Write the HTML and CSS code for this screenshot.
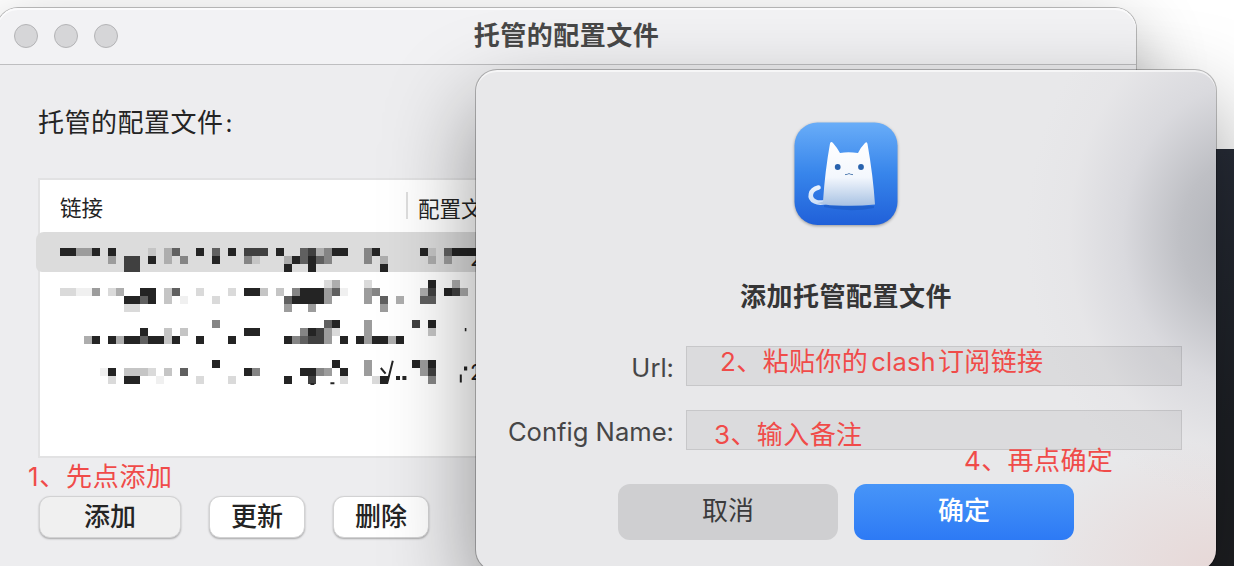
FILE: index.html
```
<!DOCTYPE html>
<html lang="zh-CN">
<head>
<meta charset="utf-8">
<title>托管的配置文件</title>
<link rel="stylesheet" href="styles.css">
</head>
<body>
<main class="desktop">
  <div class="backdrop"></div>
  <section class="window">
    <header class="titlebar">
      <div class="lights"><i></i><i></i><i></i></div>
      <h1>托管的配置文件</h1>
    </header>
    <div class="content">
      <p class="caption">托管的配置文件<span class="colon">:</span></p>
      <div class="table">
        <div class="thead"><span class="th">链接</span><span class="th second">配置文件</span></div>
        <div class="selected"></div>
        <svg class="mosaic" viewBox="0 0 53 18" width="424" height="144" shape-rendering="crispEdges" fill="none" stroke-width="1">
          <path stroke="#242424" d="M0 .5h2M4 .5h1M6 .5h1M17 .5h1M21 .5h1M27 .5h1M34 .5h2M39 .5h1M45 .5h1M49 .5h3M11 1.5h1M19 1.5h1M29 1.5h1M31 1.5h1M28 2.5h1M31 2.5h1M40 2.5h1M46 4.5h1M10 5.5h2M23 5.5h2M30 5.5h3M48 5.5h1M8 6.5h2M11 6.5h1M29 6.5h4M34 9.5h1M46 9.5h1M10 10.5h1M23 10.5h2M31 10.5h1M4 11.5h1M6 11.5h1M8 11.5h2M11 11.5h2M14 11.5h1M17 11.5h1M21 11.5h1M28 11.5h1M35 11.5h1M37 11.5h1M39 11.5h2M42 11.5h1M19 14.5h1M34 14.5h1M44 14.5h1M46 14.5h1M6 15.5h1M23 15.5h1M30 15.5h2M35 15.5h1M8 16.5h2M28 16.5h1M40 16.5h1"/>
          <path stroke="#404040" d="M23 .5h3M31 .5h1M8 1.5h2M8 2.5h2M46 5.5h1M49 5.5h1M44 9.5h1M32 10.5h1M31 11.5h2M46 15.5h1M31 16.5h1"/>
          <path stroke="#606060" d="M14 .5h1M19 .5h1M30 .5h1M48 .5h1M30 1.5h1M32 1.5h1M14 5.5h1M34 5.5h1M10 6.5h1M28 6.5h1M40 6.5h1M45 6.5h2M33 9.5h1M10 11.5h1M30 11.5h1M15 15.5h1"/>
          <path stroke="#858585" d="M33 .5h1M38 .5h1M15 1.5h1M23 1.5h1M33 1.5h1M38 1.5h1M29 5.5h1M39 5.5h1M19 9.5h1M30 10.5h1M29 11.5h1M24 15.5h1M32 15.5h1M46 16.5h1"/>
          <path stroke="#9c9c9c" d="M2 .5h2M6 1.5h1M48 1.5h1M4 5.5h1M33 5.5h1M38 5.5h1M33 6.5h1M38 6.5h1M28 7.5h1M31 7.5h1M40 7.5h1M38 9.5h1M33 10.5h1M38 10.5h1M33 11.5h1M38 11.5h1M38 14.5h1M45 14.5h1M33 15.5h1M38 15.5h1M45 15.5h1"/>
          <path stroke="#adadad" d="M13 .5h1M32 .5h1M13 1.5h1M28 1.5h1M40 1.5h1M46 1.5h1M34 4.5h1M49 4.5h1M7 5.5h1M45 5.5h1M50 5.5h1M42 6.5h1M3 11.5h1M7 11.5h1M41 11.5h1"/>
          <path stroke="#c5c5c5" d="M11 .5h1M46 .5h1M24 1.5h1M13 5.5h1M25 5.5h1M27 5.5h1M13 6.5h1M13 10.5h1M15 10.5h1M46 10.5h1M13 11.5h1M8 15.5h3M13 15.5h1"/>
          <path stroke="#dadada" d="M33 4.5h1M38 4.5h1M0 5.5h2M6 5.5h1M17 5.5h1M21 5.5h1M19 6.5h1M8 7.5h2M34 10.5h1M11 15.5h1M17 16.5h1M21 16.5h1M6 16.5h1M35 16.5h1M39 16.5h1"/>
          <path stroke="#f0f0f0" d="M2 5.5h2M35 5.5h1M15 6.5h1M5 15.5h1M12 16.5h1"/>
          <g shape-rendering="auto" stroke="#242424" stroke-width=".25">
            <path d="M40.1 15l.6.7M41.6 14.1l-.7 2.8M50.1 15.8v1M31.3 17h.5M33.8 16.9h.5"/>
            <path stroke="none" fill="#242424" d="M42 16h.5v.5H42zM42.8 16h.5v.5h-.5zM50.5 14.8h.4v.5h-.4zM50.6 10h.2v.4h-.2z"/>
          </g>
        </svg>
        <span class="digit first">2</span>
        <span class="digit last">2</span>
      </div>
      <div class="actions">
        <button class="btn wide">添加</button>
        <button class="btn">更新</button>
        <button class="btn">删除</button>
      </div>
    </div>
  </section>

  <section class="dialog">
    <svg class="app-icon" viewBox="0 0 104 104" width="104" height="104">
      <defs>
        <linearGradient id="blue" x2="0" y2="1"><stop stop-color="#69adf8"/><stop offset=".5" stop-color="#3785eb"/><stop offset="1" stop-color="#2060d9"/></linearGradient>
        <linearGradient id="fur" x2="0" y2="1"><stop stop-color="#fff"/><stop offset=".55" stop-color="#f3f7fd"/><stop offset="1" stop-color="#a8c2e3"/></linearGradient>
        <linearGradient id="tail" x2="0" y2="1"><stop stop-color="#e9f1fd"/><stop offset="1" stop-color="#d0e1f8"/></linearGradient>
      </defs>
      <rect x=".5" y=".5" width="103" height="102.5" rx="23" fill="url(#blue)"/>
      <path d="M30 83 80 84 80 86Q55 91 30 85Z" fill="#1753bb" opacity=".45"/>
      <path d="M24.500 65.500C16 67.500 14 76 21 79.500Q25 81.500 31 80" fill="none" stroke="url(#tail)" stroke-width="4.600" stroke-linecap="round"/>
      <path d="M36 21.500Q37 19 39 21Q43 25.500 46 31Q54 29.300 64 31Q67 25 71 21Q73 19 73.500 22Q79 53 81 82.500Q66 84 54 83.800Q38 84.300 23 81.300L29 79.500Q31 49 36 21.500Z" fill="url(#fur)"/>
      <circle cx="43.700" cy="45" r="2.900" fill="#2862ad"/>
      <circle cx="67" cy="45" r="2.900" fill="#2862ad"/>
      <path d="M51 52.600Q53.500 52.700 55 51.500Q56.500 52.700 59 52.600" fill="none" stroke="#4775ad" stroke-width=".9"/>
    </svg>
    <h2>添加托管配置文件</h2>
    <form class="form">
      <label for="url">Url:</label><input id="url" class="field" type="text">
      <label for="name">Config Name:</label><input id="name" class="field" type="text">
    </form>
    <div class="choices">
      <button class="choice cancel">取消</button>
      <button class="choice confirm">确定</button>
    </div>
  </section>

  <span class="note one">1、先点添加</span>
  <span class="note two">2、粘贴你的<b>clash</b>订阅链接</span>
  <span class="note three">3、输入备注</span>
  <span class="note four">4、再点确定</span>
</main>
</body>
</html>
```
FILE: styles.css
```
* { box-sizing: border-box; }
body { margin: 0; font-family: Inter, "Noto Sans CJK SC", sans-serif; }
h1, h2, p { margin: 0; }
button { border: 0; padding: 0; font: inherit; }

.desktop { position: relative; width: 1234px; height: 566px; overflow: hidden; background: #fff; }
.backdrop { position: absolute; left: 1100px; top: 149px; width: 134px; height: 417px; background: linear-gradient(#272c37, #1e2126 65%, #1e1f22); z-index: 1; }

.window { position: absolute; left: -3px; top: 8px; width: 1139px; height: 680px; border-radius: 21px; background: #ededef; box-shadow: 0 0 0 1px #b4b4b4, 0 24px 70px rgba(0,0,0,.32); }
.titlebar { height: 57px; display: grid; grid-template-columns: 1fr auto 1fr; align-items: center; padding-left: 17px; background: #f2f2f4; border-bottom: 1px solid #bebec0; border-radius: 21px 21px 0 0; box-shadow: inset 0 2px #fbfbfc; }
.titlebar h1 { font-size: 26px; line-height: 38px; letter-spacing: .5px; font-weight: 700; color: #484848; padding-right: 17px; }
.lights { display: flex; gap: 16px; }
.lights i { width: 24px; height: 24px; border-radius: 50%; background: #d6d6d8; border: 1px solid #b4b4b6; }
.content { padding: 38px 0 0 41px; }
.caption { font-size: 26px; line-height: 40px; letter-spacing: .5px; color: #242424; }
.colon { margin-left: 2px; font-size: 24px; }
.table { position: relative; margin-top: 34px; width: 1060px; height: 280px; background: #fff; border: 2px solid #e2e2e3; }
.thead { display: flex; align-items: center; height: 52px; padding-left: 20px; font-size: 21.5px; color: #242424; }
.th { width: 346px; line-height: 30px; padding-top: 3px; }
.second { border-left: 2px solid #dedede; height: 27px; padding: 0 0 0 10px; line-height: 34px; margin-bottom: 2px; }
.selected { width: 1058px; height: 40px; margin-left: -4px; background: #dcdcdc; border-radius: 8px 8px 2px 6px; }
.mosaic { position: absolute; left: 20px; top: 68px; }
.digit { position: absolute; left: 430px; font-size: 22px; line-height: 24px; color: #242424; }
.first { top: 66px; }
.last { top: 180px; }
.actions { display: flex; gap: 28px; margin: 38px 0 0 1px; }
.btn { width: 96px; height: 42px; border-radius: 11px; background: #fff; border: 1px solid #d2d2d3; box-shadow: 0 1px 2px rgba(0,0,0,.3); font-size: 26px; font-weight: 500; color: #242424; line-height: 36px; padding-bottom: 1px; }
.wide { width: 142px; background: #f0f0f0; }

.dialog {
  position: absolute; z-index: 2; left: 476px; top: 70px; width: 740px; height: 501px; padding: 52px 33px 0 33px; border-radius: 21px;
  background:
    radial-gradient(ellipse 215px 270px at 765px 165px, rgba(140,143,151,.62), rgba(150,152,160,.5) 28%, rgba(180,180,190,.28) 55%, rgba(215,212,216,.12) 80%, transparent),
    radial-gradient(ellipse 190px 130px at 740px 501px, rgba(230,205,202,.6), transparent),
    #e8e8ea;
  box-shadow: inset 0 2px rgba(255,255,255,.6), 0 0 0 1px rgba(0,0,0,.25), 0 36px 90px rgba(0,0,0,.4);
  display: flex; flex-direction: column; align-items: center;
}
.app-icon { filter: drop-shadow(0 1px 1.5px rgba(0,0,0,.35)); flex: none; }
.dialog h2 { margin-top: 51px; font-size: 26px; line-height: 40px; letter-spacing: .5px; font-weight: 700; color: #353536; }
.form { width: 100%; margin-top: 29px; display: grid; grid-template-columns: 165px 496px; column-gap: 12px; row-gap: 24px; }
.form label { display: flex; justify-content: flex-end; white-space: nowrap; font-size: 25.6px; line-height: 44px; height: 40px; color: #464647; }
.field { height: 40px; width: 496px; border: 1px solid rgba(0,0,0,.09); background: rgba(0,0,0,.055); outline: 0; }
.choices { display: flex; gap: 16px; margin-top: 34px; }
.choice { width: 220px; height: 56px; border-radius: 12px; font-size: 26px; line-height: 54px; padding-bottom: 2px; }
.cancel { background: #cfcfd1; color: #3b3b3c; }
.confirm { background: linear-gradient(#4795f8, #2d7af5); color: #fff; font-weight: 500; }

.note { position: absolute; z-index: 3; font-size: 26px; line-height: 38px; letter-spacing: .4px; color: #f04b49; white-space: nowrap; }
.note b { font-weight: 400; font-size: 25.5px; margin: 0 2px 0 3px; letter-spacing: .2px; }
.one { left: 28px; top: 458px; letter-spacing: .7px; }
.two { left: 720px; top: 343px; }
.three { left: 714px; top: 416px; }
.four { left: 964px; top: 442px; }
```
